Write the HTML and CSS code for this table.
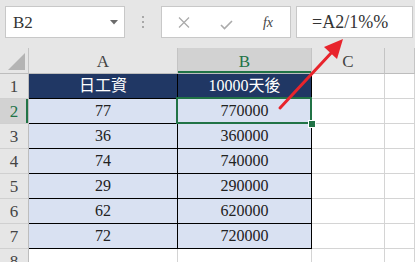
FILE: index.html
```html
<!DOCTYPE html>
<html>
<head>
<meta charset="utf-8">
<link rel="stylesheet" href="styles.css">
</head>
<body>
<div class="app">
  <div class="fbar">
    <div class="namebox">
      <span class="nb-text">B2</span>
      <svg class="nb-arrow" width="8" height="5" viewBox="0 0 8 5"><polygon points="0,0 8,0 4,4.5" fill="#6b6b6b"/></svg>
    </div>
    <div class="dots"><i></i><i></i><i></i></div>
    <div class="btns">
      <span class="btn"><svg width="12" height="11" viewBox="0 0 12 11"><path d="M1 0.5 L11 10.5 M11 0.5 L1 10.5" stroke="#ababab" stroke-width="1.3" fill="none"/></svg></span>
      <span class="btn chk"><svg width="13" height="10" viewBox="0 0 13 10"><path d="M1 5 L4.5 8.5 L12 1" stroke="#ababab" stroke-width="1.6" fill="none"/></svg></span>
      <span class="btn fx">fx</span>
    </div>
    <div class="formula">=A2/1%%</div>
  </div>
  <div class="sheet">
    <div class="c ch corner"><span class="tri"></span></div>
    <div class="c ch">A</div>
    <div class="c ch sel-col">B</div>
    <div class="c ch">C</div>
    <div class="c ch"></div>

    <div class="c rh">1</div>
    <div class="c t hd">日工資</div>
    <div class="c t hd">10000天後</div>
    <div class="c"></div>
    <div class="c"></div>

    <div class="c rh sel-row">2</div>
    <div class="c t">77</div>
    <div class="c t active">770000<span class="handle"></span></div>
    <div class="c"></div>
    <div class="c"></div>

    <div class="c rh">3</div>
    <div class="c t">36</div>
    <div class="c t">360000</div>
    <div class="c"></div>
    <div class="c"></div>

    <div class="c rh">4</div>
    <div class="c t">74</div>
    <div class="c t">740000</div>
    <div class="c"></div>
    <div class="c"></div>

    <div class="c rh">5</div>
    <div class="c t">29</div>
    <div class="c t">290000</div>
    <div class="c"></div>
    <div class="c"></div>

    <div class="c rh">6</div>
    <div class="c t">62</div>
    <div class="c t">620000</div>
    <div class="c"></div>
    <div class="c"></div>

    <div class="c rh">7</div>
    <div class="c t">72</div>
    <div class="c t">720000</div>
    <div class="c"></div>
    <div class="c"></div>

    <div class="c rh">8</div>
    <div class="c"></div>
    <div class="c"></div>
    <div class="c"></div>
    <div class="c"></div>
  </div>
  <svg class="arrow" width="415" height="262" viewBox="0 0 415 262">
    <line x1="280" y1="108" x2="333" y2="51" stroke="#e8242c" stroke-width="3" stroke-linecap="round"/>
    <polygon points="343,39 324,47 337,59" fill="#e8242c"/>
  </svg>
</div>
</body>
</html>
```
FILE: styles.css
```css
* { box-sizing: border-box; }
html, body {
  margin: 0;
  padding: 0;
  background: #ffffff;
  overflow: hidden;
}
body {
  font-family: "Liberation Serif", "Noto Sans CJK TC", serif;
  color: #222;
}
.app {
  position: relative;
  width: 415px;
  height: 262px;
  overflow: hidden;
}
.fbar {
  height: 48px;
  background: #e6e6e6;
  display: flex;
  align-items: flex-start;
  padding: 6px 2px 0 5px;
}
.namebox {
  width: 120px;
  height: 32px;
  background: #fff;
  border: 1px solid #c8c8c8;
  display: flex;
  align-items: center;
  justify-content: space-between;
  padding: 0 6px 0 7px;
}
.nb-text {
  font-size: 17px;
  color: #333;
  line-height: 1;
}
.nb-arrow { margin-top: 1px; }
.dots {
  width: 36px;
  height: 32px;
  display: flex;
  flex-direction: column;
  align-items: center;
  justify-content: center;
  gap: 3px;
}
.dots i {
  display: block;
  width: 2px;
  height: 2px;
  background: #a8a8a8;
}
.btns {
  width: 130px;
  height: 32px;
  background: #fff;
  border: 1px solid #c8c8c8;
  display: grid;
  grid-template-columns: 44px 40px 44px;
  align-items: center;
}
.btn {
  display: flex;
  justify-content: center;
  align-items: center;
}
.btn.chk { padding-top: 6px; }
.btn.fx {
  font-style: italic;
  font-size: 14px;
  color: #444;
  padding-top: 1px;
}
.formula {
  flex: 1;
  margin-left: 5px;
  height: 32px;
  background: #fff;
  border: 1px solid #c8c8c8;
  font-size: 18px;
  color: #333;
  line-height: 30px;
  padding-left: 15px;
}
.sheet {
  display: grid;
  grid-template-columns: 29px 149px 134px 73px 1fr;
  grid-template-rows: 26px repeat(8, 25px);
}
.c {
  border-right: 1px solid #d4d4d4;
  border-bottom: 1px solid #d4d4d4;
  font-size: 16px;
  display: flex;
  align-items: center;
  justify-content: center;
  line-height: 1;
  white-space: nowrap;
  position: relative;
}
.ch {
  background: #e6e6e6;
  color: #444;
  border-right-color: #c4c4c4;
  border-bottom-color: #bdbdbd;
  font-size: 17px;
  padding-top: 2px;
}
.corner {
  justify-content: flex-end;
  align-items: flex-end;
  padding: 0 3px 3px 0;
}
.tri {
  width: 0;
  height: 0;
  border-left: 17px solid transparent;
  border-bottom: 17px solid #b4b4b4;
}
.sel-col {
  background: #d2d2d2;
  color: #217346;
  box-shadow: inset 0 -2px 0 #217346;
}
.rh {
  background: #e6e6e6;
  color: #444;
  border-right-color: #bdbdbd;
  border-bottom-color: #d0d0d0;
  font-size: 17px;
}
.sel-row {
  background: #d2d2d2;
  color: #217346;
  box-shadow: inset -2px 0 0 #217346;
}
.t {
  background: #d9e1f2;
  color: #222;
  border-right-color: #000;
  border-bottom-color: #000;
}
.hd {
  background: #203764;
  color: #ffffff;
  font-size: 16px;
}
.active::after {
  content: "";
  position: absolute;
  top: -2px;
  left: -2px;
  right: -1px;
  bottom: -1px;
  border: 2px solid #217346;
}
.handle {
  position: absolute;
  right: -4px;
  bottom: -4px;
  width: 6px;
  height: 6px;
  background: #217346;
  outline: 1px solid #fff;
  z-index: 2;
}
.arrow {
  position: absolute;
  top: 0;
  left: 0;
  pointer-events: none;
}
```
